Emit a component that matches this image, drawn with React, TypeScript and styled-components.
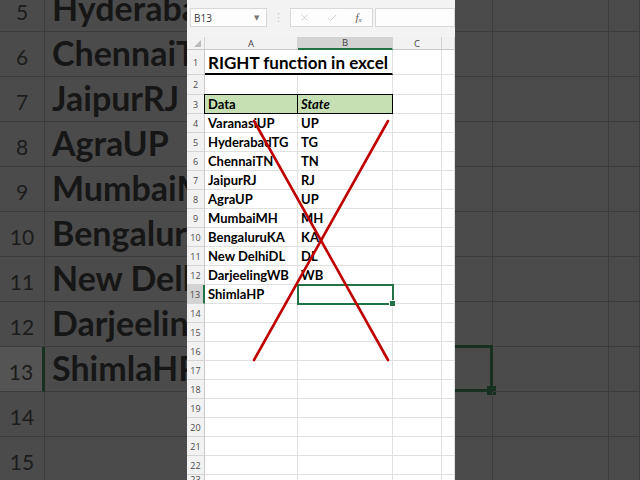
import React from "react";
import styled, { createGlobalStyle } from "styled-components";
import { X, Check } from "lucide-react";

const Global = createGlobalStyle`
  html, body { margin: 0; padding: 0; background: #4b4b4b; }
  body { width: 640px; height: 480px; overflow: hidden; font-family: Lato, "Liberation Sans", sans-serif; }
  * { box-sizing: border-box; }
`;

const Stage = styled.div`
  display: flex;
  width: 640px;
  height: 480px;
  overflow: hidden;
  background: #4b4b4b;
`;

/* ---------- blurred background (zoomed sheet) ---------- */
const BgSide = styled.div<{ $w: number }>`
  width: ${(p) => p.$w}px;
  flex: none;
  overflow: hidden;
  background: #4b4b4b;
`;

const BgRows = styled.div`
  margin-top: -13px;
  display: flex;
  flex-direction: column;
`;

const BgRow = styled.div<{ $cols: string }>`
  display: grid;
  grid-template-columns: ${(p) => p.$cols};
  height: 45px;
  flex: none;
`;

const BgNum = styled.div<{ $active?: boolean }>`
  display: flex;
  align-items: flex-end;
  justify-content: center;
  padding-bottom: 7px;
  font-family: Lato, sans-serif;
  font-size: 21px;
  color: #1c1c1c;
  background: ${(p) => (p.$active ? "#545454" : "transparent")};
  border-bottom: 1px solid #3c3c3c;
  border-right: ${(p) => (p.$active ? "3px solid #17301f" : "1px solid #3c3c3c")};
`;

const BgText = styled.div`
  display: flex;
  align-items: flex-end;
  padding: 0 0 3px 7px;
  font-family: Lato, sans-serif;
  font-weight: 700;
  font-size: 34px;
  color: #161616;
  white-space: nowrap;
  overflow: hidden;
  border-bottom: 1px solid #3c3c3c;
`;

const BgCell = styled.div<{ $sel?: boolean }>`
  position: relative;
  border-bottom: 1px solid #3c3c3c;
  border-right: 1px solid #3c3c3c;
  ${(p) =>
    p.$sel
      ? `
    border-top: 3px solid #17301f;
    border-right: 3px solid #17301f;
    border-bottom: 3px solid #17301f;
    margin-top: -2px;
    &::after {
      content: "";
      position: absolute;
      right: -6px;
      bottom: -6px;
      width: 9px;
      height: 9px;
      background: #17301f;
    }
  `
      : ""}
`;

/* ---------- centre panel (Excel) ---------- */
const Panel = styled.div`
  position: relative;
  width: 268px;
  flex: none;
  height: 480px;
  background: #ffffff;
  overflow: hidden;
  display: flex;
  flex-direction: column;
`;

const FormulaBar = styled.div`
  height: 37px;
  flex: none;
  display: flex;
  align-items: center;
  padding-left: 3px;
  padding-bottom: 2px;
  background: #f3f3f3;
`;

const Box = styled.div<{ $w?: number; $gap?: number }>`
  height: 19px;
  ${(p) => (p.$w ? `width: ${p.$w}px; flex: none;` : "flex: 1;")}
  margin-left: ${(p) => p.$gap ?? 0}px;
  background: #fdfdfd;
  border: 1px solid #d8d8d8;
  display: flex;
  align-items: center;
`;

const NameText = styled.span`
  flex: 1;
  padding-left: 3px;
  font-family: "Open Sans", sans-serif;
  font-size: 10px;
  color: #3a3a3a;
`;

const Arrow = styled.span`
  width: 12px;
  font-size: 7px;
  color: #777;
  font-family: "DejaVu Sans", sans-serif;
`;

const Sep = styled.span`
  width: 23px;
  flex: none;
  text-align: center;
  font-family: "DejaVu Sans", sans-serif;
  font-size: 11px;
  color: #c4c4c4;
`;

const IconSlot = styled.span`
  width: 28px;
  display: flex;
  justify-content: center;
  align-items: center;
  color: #c2c2c2;
`;

const Fx = styled.span`
  font-family: "Liberation Serif", serif;
  font-style: italic;
  font-size: 11px;
  color: #555;
  sub {
    font-size: 7px;
    vertical-align: -1px;
  }
`;

const Sheet = styled.div`
  display: grid;
  grid-template-columns: 18px 93px 95px 49px 1fr;
  grid-template-rows: 13px 25px 20px repeat(20, 19px);
`;

const Corner = styled.div`
  position: relative;
  background: #f2f2f2;
  border-right: 1px solid #d4d4d4;
  border-bottom: 1px solid #c9c9c9;
  &::after {
    content: "";
    position: absolute;
    right: 3px;
    bottom: 2px;
    border-left: 7px solid transparent;
    border-bottom: 7px solid #bcbcbc;
  }
`;

const ColHead = styled.div<{ $active?: boolean }>`
  display: flex;
  align-items: center;
  justify-content: center;
  font-family: "Open Sans", sans-serif;
  font-size: 9.5px;
  color: #444;
  background: ${(p) => (p.$active ? "#d3d3d3" : "#f2f2f2")};
  border-right: 1px solid #d4d4d4;
  border-bottom: ${(p) => (p.$active ? "2px solid #217346" : "1px solid #c9c9c9")};
`;

const RowHead = styled.div<{ $active?: boolean }>`
  display: flex;
  align-items: center;
  justify-content: center;
  font-family: "Open Sans", sans-serif;
  font-size: 9px;
  line-height: 1;
  color: #4a4a4a;
  background: ${(p) => (p.$active ? "#d3d3d3" : "#f2f2f2")};
  border-bottom: 1px solid #d4d4d4;
  border-right: ${(p) => (p.$active ? "2px solid #217346" : "1px solid #c9c9c9")};
`;

const Cell = styled.div<{ $sel?: boolean }>`
  position: relative;
  display: flex;
  align-items: flex-end;
  padding: 0 0 1px 3px;
  font-family: Lato, sans-serif;
  font-weight: 700;
  font-size: 13px;
  color: #000;
  white-space: nowrap;
  border-right: 1px solid #e0e0e0;
  border-bottom: 1px solid #e0e0e0;
  ${(p) =>
    p.$sel
      ? `
    outline: 2px solid #217346;
    outline-offset: -1px;
    z-index: 1;
    &::after {
      content: "";
      position: absolute;
      right: -4px;
      bottom: -4px;
      width: 5px;
      height: 5px;
      background: #217346;
      border: 1px solid #fff;
    }
  `
      : ""}
`;

const Title = styled(Cell)`
  grid-column: span 2;
  font-size: 17px;
  padding-bottom: 0;
  border-right: 1px solid #e0e0e0;
  border-bottom: 2px solid #000;
`;

const HeadCell = styled(Cell)<{ $italic?: boolean }>`
  background: #c6e0b4;
  font-style: ${(p) => (p.$italic ? "italic" : "normal")};
  border-right: 1px solid #000;
  border-bottom: 1px solid #000;
  box-shadow: 0 -1px 0 #000, -1px 0 0 #000, -1px -1px 0 #000;
`;

const Cross = styled.svg`
  position: absolute;
  left: 0;
  top: 0;
  width: 268px;
  height: 480px;
  pointer-events: none;
  z-index: 2;
`;

const rows: [string, string][] = [
  ["VaranasiUP", "UP"],
  ["HyderabadTG", "TG"],
  ["ChennaiTN", "TN"],
  ["JaipurRJ", "RJ"],
  ["AgraUP", "UP"],
  ["MumbaiMH", "MH"],
  ["BengaluruKA", "KA"],
  ["New DelhiDL", "DL"],
  ["DarjeelingWB", "WB"],
  ["ShimlaHP", ""],
];

const bgRows: [number, string][] = [
  [5, "HyderabadTG"],
  [6, "ChennaiTN"],
  [7, "JaipurRJ"],
  [8, "AgraUP"],
  [9, "MumbaiMH"],
  [10, "BengaluruKA"],
  [11, "New DelhiDL"],
  [12, "DarjeelingWB"],
  [13, "ShimlaHP"],
  [14, ""],
  [15, ""],
];

export default function App() {
  return (
    <Stage>
      <Global />
      <BgSide $w={187}>
        <BgRows>
          {bgRows.map(([n, t]) => (
            <BgRow key={n} $cols="45px 1fr">
              <BgNum $active={n === 13}>{n}</BgNum>
              <BgText>{t}</BgText>
            </BgRow>
          ))}
        </BgRows>
      </BgSide>

      <Panel>
        <FormulaBar>
          <Box $w={77}>
            <NameText>B13</NameText>
            <Arrow>▼</Arrow>
          </Box>
          <Sep>⋮</Sep>
          <Box $w={83}>
            <IconSlot>
              <X size={11} strokeWidth={1.4} />
            </IconSlot>
            <IconSlot>
              <Check size={12} strokeWidth={1.4} />
            </IconSlot>
            <IconSlot>
              <Fx>
                f<sub>x</sub>
              </Fx>
            </IconSlot>
          </Box>
          <Box $gap={2} />
        </FormulaBar>

        <Sheet>
          <Corner />
          <ColHead>A</ColHead>
          <ColHead $active>B</ColHead>
          <ColHead>C</ColHead>
          <ColHead />

          <RowHead>1</RowHead>
          <Title>RIGHT function in excel</Title>
          <Cell />
          <Cell />

          <RowHead>2</RowHead>
          <Cell />
          <Cell />
          <Cell />
          <Cell />

          <RowHead>3</RowHead>
          <HeadCell>Data</HeadCell>
          <HeadCell $italic>State</HeadCell>
          <Cell />
          <Cell />

          {rows.map(([a, b], i) => (
            <React.Fragment key={i}>
              <RowHead $active={i + 4 === 13}>{i + 4}</RowHead>
              <Cell>{a}</Cell>
              <Cell $sel={i + 4 === 13}>{b}</Cell>
              <Cell />
              <Cell />
            </React.Fragment>
          ))}

          {Array.from({ length: 10 }, (_, i) => i + 14).map((n) => (
            <React.Fragment key={n}>
              <RowHead>{n}</RowHead>
              <Cell />
              <Cell />
              <Cell />
              <Cell />
            </React.Fragment>
          ))}
        </Sheet>

        <Cross viewBox="0 0 268 480">
          <line x1="67" y1="121" x2="201" y2="360" stroke="#c00000" strokeWidth="2.6" strokeLinecap="round" />
          <line x1="201" y1="121" x2="67" y2="360" stroke="#c00000" strokeWidth="2.6" strokeLinecap="round" />
        </Cross>
      </Panel>

      <BgSide $w={185}>
        <BgRows>
          {bgRows.map(([n]) => (
            <BgRow key={n} $cols="38px 116px 1fr">
              <BgCell $sel={n === 13} />
              <BgCell />
              <BgCell />
            </BgRow>
          ))}
        </BgRows>
      </BgSide>
    </Stage>
  );
}
